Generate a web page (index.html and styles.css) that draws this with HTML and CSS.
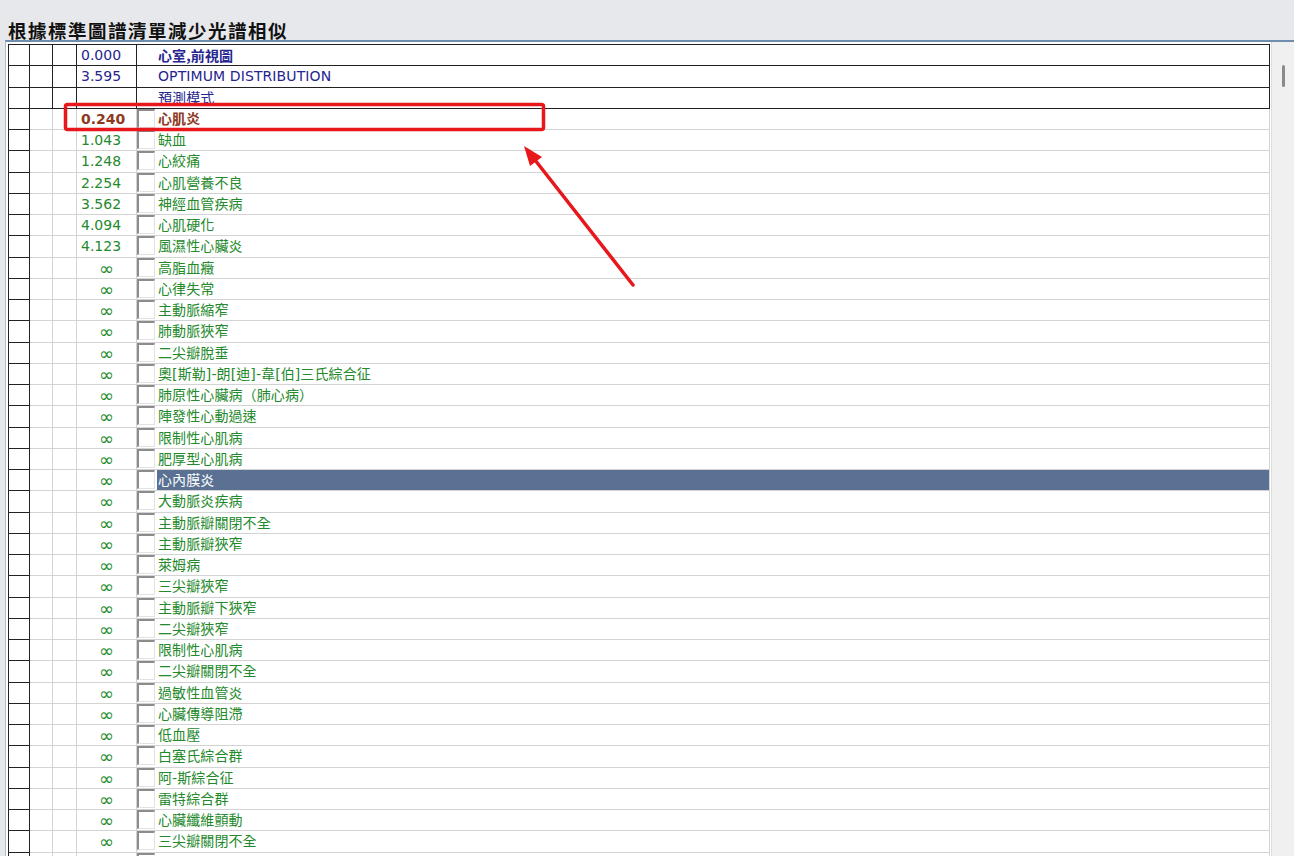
FILE: index.html
```html
<!DOCTYPE html>
<html>
<head>
  <title>根據標準圖譜清單減少光譜相似</title>
  <meta charset="UTF-8">
  <link rel="stylesheet" href="styles.css">
</head>
<body>
  <div class="title">根據標準圖譜清單減少光譜相似</div>
  <div class="panel">
    <div class="grid">
      <div class="row head"><div class="cell"></div><div class="cell"></div><div class="cell"></div><div class="cell val">0.000</div><div class="cell chk"></div><div class="cell name strong">心室,前視圖</div></div>
      <div class="row head"><div class="cell"></div><div class="cell"></div><div class="cell"></div><div class="cell val">3.595</div><div class="cell chk"></div><div class="cell name">OPTIMUM DISTRIBUTION</div></div>
      <div class="row head"><div class="cell"></div><div class="cell"></div><div class="cell"></div><div class="cell val"></div><div class="cell chk"></div><div class="cell name">預測模式</div></div>

      <div class="row item current"><div class="cell"></div><div class="cell"></div><div class="cell"></div><div class="cell val">0.240</div><div class="cell chk"><span class="box"></span></div><div class="cell name">心肌炎</div></div>
      <div class="row item"><div class="cell"></div><div class="cell"></div><div class="cell"></div><div class="cell val">1.043</div><div class="cell chk"><span class="box"></span></div><div class="cell name">缺血</div></div>
      <div class="row item"><div class="cell"></div><div class="cell"></div><div class="cell"></div><div class="cell val">1.248</div><div class="cell chk"><span class="box"></span></div><div class="cell name">心絞痛</div></div>
      <div class="row item"><div class="cell"></div><div class="cell"></div><div class="cell"></div><div class="cell val">2.254</div><div class="cell chk"><span class="box"></span></div><div class="cell name">心肌營養不良</div></div>
      <div class="row item"><div class="cell"></div><div class="cell"></div><div class="cell"></div><div class="cell val">3.562</div><div class="cell chk"><span class="box"></span></div><div class="cell name">神經血管疾病</div></div>
      <div class="row item"><div class="cell"></div><div class="cell"></div><div class="cell"></div><div class="cell val">4.094</div><div class="cell chk"><span class="box"></span></div><div class="cell name">心肌硬化</div></div>
      <div class="row item"><div class="cell"></div><div class="cell"></div><div class="cell"></div><div class="cell val">4.123</div><div class="cell chk"><span class="box"></span></div><div class="cell name">風濕性心臟炎</div></div>
      <div class="row item"><div class="cell"></div><div class="cell"></div><div class="cell"></div><div class="cell val inf">∞</div><div class="cell chk"><span class="box"></span></div><div class="cell name">高脂血癥</div></div>
      <div class="row item"><div class="cell"></div><div class="cell"></div><div class="cell"></div><div class="cell val inf">∞</div><div class="cell chk"><span class="box"></span></div><div class="cell name">心律失常</div></div>
      <div class="row item"><div class="cell"></div><div class="cell"></div><div class="cell"></div><div class="cell val inf">∞</div><div class="cell chk"><span class="box"></span></div><div class="cell name">主動脈縮窄</div></div>
      <div class="row item"><div class="cell"></div><div class="cell"></div><div class="cell"></div><div class="cell val inf">∞</div><div class="cell chk"><span class="box"></span></div><div class="cell name">肺動脈狹窄</div></div>
      <div class="row item"><div class="cell"></div><div class="cell"></div><div class="cell"></div><div class="cell val inf">∞</div><div class="cell chk"><span class="box"></span></div><div class="cell name">二尖瓣脫垂</div></div>
      <div class="row item"><div class="cell"></div><div class="cell"></div><div class="cell"></div><div class="cell val inf">∞</div><div class="cell chk"><span class="box"></span></div><div class="cell name">奧[斯勒]-朗[迪]-韋[伯]三氏綜合征</div></div>
      <div class="row item"><div class="cell"></div><div class="cell"></div><div class="cell"></div><div class="cell val inf">∞</div><div class="cell chk"><span class="box"></span></div><div class="cell name">肺原性心臟病（肺心病）</div></div>
      <div class="row item"><div class="cell"></div><div class="cell"></div><div class="cell"></div><div class="cell val inf">∞</div><div class="cell chk"><span class="box"></span></div><div class="cell name">陣發性心動過速</div></div>
      <div class="row item"><div class="cell"></div><div class="cell"></div><div class="cell"></div><div class="cell val inf">∞</div><div class="cell chk"><span class="box"></span></div><div class="cell name">限制性心肌病</div></div>
      <div class="row item"><div class="cell"></div><div class="cell"></div><div class="cell"></div><div class="cell val inf">∞</div><div class="cell chk"><span class="box"></span></div><div class="cell name">肥厚型心肌病</div></div>
      <div class="row item selected"><div class="cell"></div><div class="cell"></div><div class="cell"></div><div class="cell val inf">∞</div><div class="cell chk"><span class="box"></span></div><div class="cell name">心內膜炎</div></div>
      <div class="row item"><div class="cell"></div><div class="cell"></div><div class="cell"></div><div class="cell val inf">∞</div><div class="cell chk"><span class="box"></span></div><div class="cell name">大動脈炎疾病</div></div>
      <div class="row item"><div class="cell"></div><div class="cell"></div><div class="cell"></div><div class="cell val inf">∞</div><div class="cell chk"><span class="box"></span></div><div class="cell name">主動脈瓣關閉不全</div></div>
      <div class="row item"><div class="cell"></div><div class="cell"></div><div class="cell"></div><div class="cell val inf">∞</div><div class="cell chk"><span class="box"></span></div><div class="cell name">主動脈瓣狹窄</div></div>
      <div class="row item"><div class="cell"></div><div class="cell"></div><div class="cell"></div><div class="cell val inf">∞</div><div class="cell chk"><span class="box"></span></div><div class="cell name">萊姆病</div></div>
      <div class="row item"><div class="cell"></div><div class="cell"></div><div class="cell"></div><div class="cell val inf">∞</div><div class="cell chk"><span class="box"></span></div><div class="cell name">三尖瓣狹窄</div></div>
      <div class="row item"><div class="cell"></div><div class="cell"></div><div class="cell"></div><div class="cell val inf">∞</div><div class="cell chk"><span class="box"></span></div><div class="cell name">主動脈瓣下狹窄</div></div>
      <div class="row item"><div class="cell"></div><div class="cell"></div><div class="cell"></div><div class="cell val inf">∞</div><div class="cell chk"><span class="box"></span></div><div class="cell name">二尖瓣狹窄</div></div>
      <div class="row item"><div class="cell"></div><div class="cell"></div><div class="cell"></div><div class="cell val inf">∞</div><div class="cell chk"><span class="box"></span></div><div class="cell name">限制性心肌病</div></div>
      <div class="row item"><div class="cell"></div><div class="cell"></div><div class="cell"></div><div class="cell val inf">∞</div><div class="cell chk"><span class="box"></span></div><div class="cell name">二尖瓣關閉不全</div></div>
      <div class="row item"><div class="cell"></div><div class="cell"></div><div class="cell"></div><div class="cell val inf">∞</div><div class="cell chk"><span class="box"></span></div><div class="cell name">過敏性血管炎</div></div>
      <div class="row item"><div class="cell"></div><div class="cell"></div><div class="cell"></div><div class="cell val inf">∞</div><div class="cell chk"><span class="box"></span></div><div class="cell name">心臟傳導阻滯</div></div>
      <div class="row item"><div class="cell"></div><div class="cell"></div><div class="cell"></div><div class="cell val inf">∞</div><div class="cell chk"><span class="box"></span></div><div class="cell name">低血壓</div></div>
      <div class="row item"><div class="cell"></div><div class="cell"></div><div class="cell"></div><div class="cell val inf">∞</div><div class="cell chk"><span class="box"></span></div><div class="cell name">白塞氏綜合群</div></div>
      <div class="row item"><div class="cell"></div><div class="cell"></div><div class="cell"></div><div class="cell val inf">∞</div><div class="cell chk"><span class="box"></span></div><div class="cell name">阿-斯綜合征</div></div>
      <div class="row item"><div class="cell"></div><div class="cell"></div><div class="cell"></div><div class="cell val inf">∞</div><div class="cell chk"><span class="box"></span></div><div class="cell name">雷特綜合群</div></div>
      <div class="row item"><div class="cell"></div><div class="cell"></div><div class="cell"></div><div class="cell val inf">∞</div><div class="cell chk"><span class="box"></span></div><div class="cell name">心臟纖維顫動</div></div>
      <div class="row item"><div class="cell"></div><div class="cell"></div><div class="cell"></div><div class="cell val inf">∞</div><div class="cell chk"><span class="box"></span></div><div class="cell name">三尖瓣關閉不全</div></div>
      <div class="row item"><div class="cell"></div><div class="cell"></div><div class="cell"></div><div class="cell val inf">∞</div><div class="cell chk"><span class="box"></span></div><div class="cell name">心臟瓣膜疾病</div></div>
    </div>
    <div class="scrollbar"><div class="thumb"></div></div>
  </div>

  <!-- annotation drawn over the screenshot -->
  <svg class="markup" width="1294" height="856" viewBox="0 0 1294 856">
    <rect x="65.5" y="104.5" width="478" height="25" rx="2" fill="none" stroke="#e8171b" stroke-width="3.5"/>
    <line x1="633" y1="285" x2="535" y2="160" stroke="#e8171b" stroke-width="3.5" stroke-linecap="round"/>
    <polygon points="524,146 542,157 530,166" fill="#e8171b"/>
  </svg>
</body>
</html>
```

FILE: styles.css
```css
body {
  margin: 0;
  padding: 0;
  width: 1294px;
  height: 856px;
  overflow: hidden;
  background-color: #e7e8eb;
  font-family: 'DejaVu Sans', 'Noto Sans CJK TC', sans-serif;
  font-size: 14px;
  position: relative;
}
.title {
  height: 20px;
  padding: 20px 0 0 8px;
  line-height: 20px;
  font-family: 'Noto Sans CJK TC', sans-serif;
  font-size: 18.5px;
  font-weight: bold;
  letter-spacing: 1.5px;
  color: #111111;
}
.panel {
  margin-left: 5px;
  height: 814px;
  display: flex;
  background-color: #ffffff;
  border-top: 2px solid #6f8eae;
  border-left: 1px solid #a9bccf;
}
.grid {
  margin: 2px 0 0 2px;
  width: 1261px;
  border-left: 1px solid #222222;
  border-top: 1px solid #222222;
  align-self: flex-start;
}
.row {
  display: grid;
  grid-template-columns: 21px 23px 24px 60px 20px 1113px;
  height: 21.25px;
}
.cell {
  box-sizing: border-box;
  border-right: 1px solid #d3d3d3;
  border-bottom: 1px solid #d3d3d3;
  line-height: 20px;
  white-space: nowrap;
  overflow: hidden;
}
.cell:first-child {
  border-color: #222222;
}
.head .cell {
  border-color: #222222;
  color: #25258f;
}
.head .chk {
  border-right: none;
}
.item .cell {
  color: #23892a;
}
.val {
  padding-left: 4px;
}
.val.inf {
  padding-left: 0;
  text-align: center;
  font-size: 18px;
  line-height: 21px;
}
.chk {
  border-right: none;
}
.box {
  display: block;
  box-sizing: border-box;
  width: 18px;
  height: 19px;
  border-top: 2px solid #8c8c8c;
  border-left: 2px solid #8c8c8c;
  border-right: 1px solid #e2e2e2;
  border-bottom: 1px solid #e2e2e2;
  background-color: #ffffff;
}
.name {
  padding-left: 1px;
  letter-spacing: 0.1px;
}
.strong {
  font-family: 'Noto Sans CJK TC', sans-serif;
  font-weight: bold;
}
.item.current .cell {
  color: #8e3a1e;
  font-weight: bold;
}
.item.selected .name {
  background-color: #5a7194;
  color: #ffffff;
}
.scrollbar {
  width: 23px;
  margin-left: 1px;
  background-color: #f0f0f0;
  border-left: 1px solid #dedede;
  display: flex;
  flex-direction: column;
  align-items: center;
  padding-top: 23px;
  box-sizing: border-box;
}
.thumb {
  width: 3px;
  height: 22px;
  border-radius: 2px;
  background-color: #8a8a8a;
}
.markup {
  position: absolute;
  left: 0;
  top: 0;
  pointer-events: none;
}
```
